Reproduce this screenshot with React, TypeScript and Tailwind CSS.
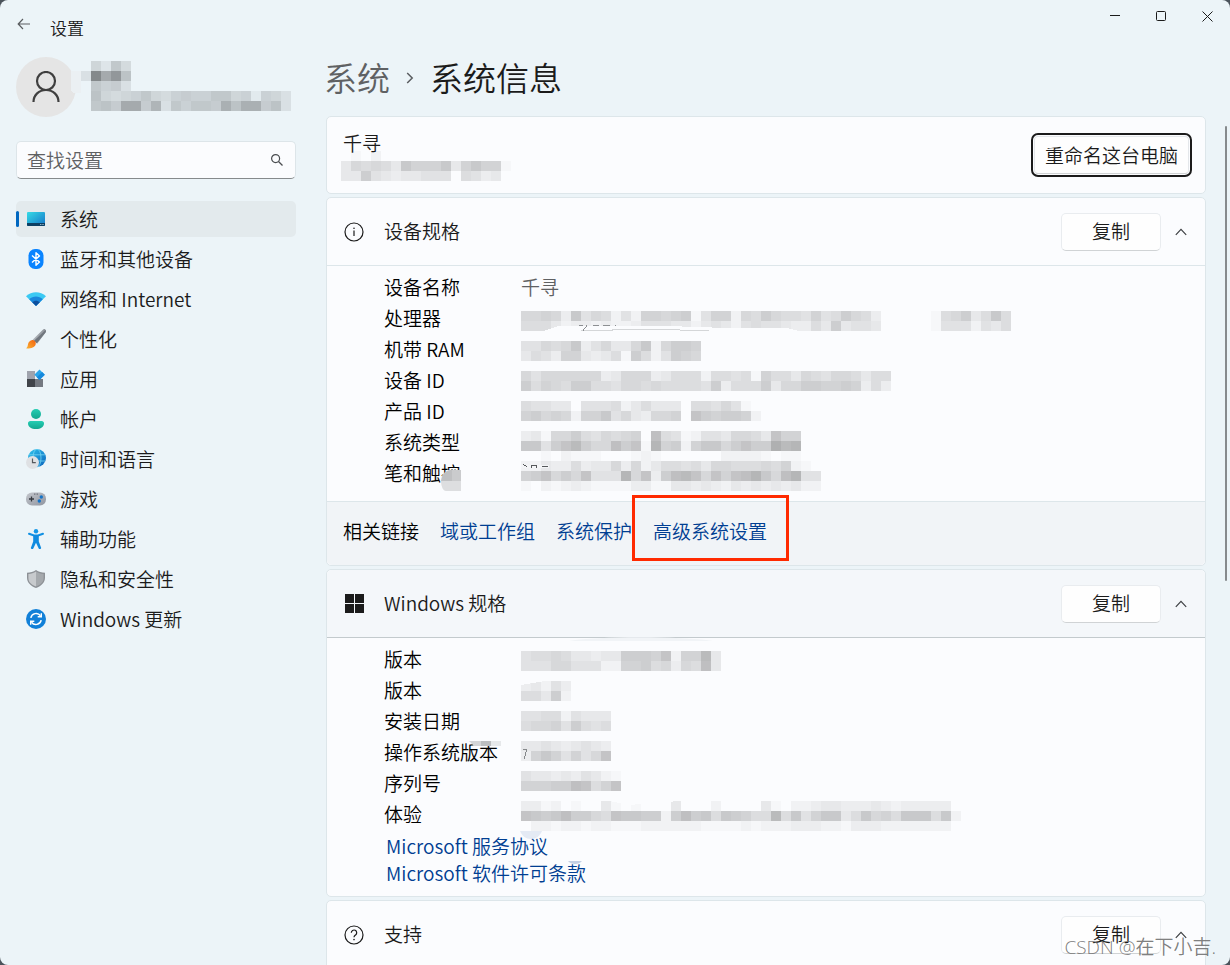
import type { ReactNode } from 'react';
import clsx from 'clsx';

const CELL = 10;

// Each character is one cell: 0 is clear, higher base-36 digits are darker.
const PROFILE_MASK = [
  '006395',
  '04mfja',
  '009784',
  '00a6567965787799672764',
  '009a8ff8d497998eaee8a4',
];

const NAME_MASK = [
  '01020000000000000',
  '476764a888a48a881',
  '4495434455506534',
];

const DEVICE_MASK = [
  '77873a57625288789158827697665856976300000167946a6',
  '6664233232235554424542565543364945540000015552546',
  '',
  '55767a357447a27998',
  '465388434619625987',
  '',
  '7577777734777346662665618664765776466',
  '9687699665776766665936669477998898363',
  '',
  '655440555624644406657510',
  '89787288a57437780b989982',
  '',
  '3417796576780c65125547764b88',
  'aa59bd977c9b1e8928aa79b99fde',
  '0010211100012100000022221011',
  '224336344737246656477666768210',
  '89b797b555e7b39cdb7b8bcea7ce55',
  '102123211113311443432434343422',
];

const WINDOWS_MASK = [
  '56676443449998b288d4',
  '555775552288967376c4',
  '',
  '34253',
  '66492',
  '',
  '556625444',
  '677859656',
  '',
  '445434543',
  '38a85857b',
  '',
  '5443435421',
  '88899cb68b',
  '',
  '33120100410100040002000041022344333432333330',
  'ba9ac9976baa9929c9a6a9866d6a58aa46a786aaa6a2',
  '02212212211122222211112122233322133322222220',
];

function Mosaic({ rows, className, children }: { rows: string[]; className?: string; children?: ReactNode }) {
  const cols = Math.max(...rows.map((row) => row.length));
  return (
    <svg
      aria-hidden="true"
      width={cols * CELL}
      height={rows.length * CELL}
      shapeRendering="crispEdges"
      className={clsx('block shrink-0 overflow-visible', className)}
    >
      {rows.map((row, y) =>
        row.split('').map((ch, x) => {
          const level = parseInt(ch, 36);
          return level > 0 ? (
            <rect
              key={`${x}-${y}`}
              x={x * CELL}
              y={y * CELL}
              width={CELL}
              height={CELL}
              fill="#000"
              fillOpacity={level * 0.02}
            />
          ) : null;
        })
      )}
      {children}
    </svg>
  );
}

function SystemIcon() {
  return (
    <svg viewBox="0 0 20 20" className="h-5 w-5">
      <defs>
        <linearGradient id="screen" x1="0" y1="0" x2="1" y2="1">
          <stop offset="0" stopColor="#35dbe6" />
          <stop offset="1" stopColor="#1474c8" />
        </linearGradient>
      </defs>
      <rect x="1" y="3" width="18" height="14" rx="1" fill="url(#screen)" />
      <path d="M1 14h18v2a1 1 0 0 1-1 1H2a1 1 0 0 1-1-1z" fill="#0c3f63" />
      <path d="M14.300 15.500h1M16.500 15.500h1" stroke="#c8e6f5" strokeWidth="1" />
    </svg>
  );
}

function BluetoothIcon() {
  return (
    <svg viewBox="0 0 20 20" className="h-5 w-5">
      <rect x="2.500" y="0" width="15" height="20" rx="6.500" fill="#0a84ff" />
      <path d="M6 6.500l7.500 6.600L10 16.200V3.800l3.500 3.100L6 13.500" fill="none" stroke="#fff" strokeWidth="1.400" strokeLinejoin="round" />
    </svg>
  );
}

function NetworkIcon() {
  return (
    <svg viewBox="0 0 20 20" className="h-5 w-5">
      <path d="M0 7.200C5.500 1.900 14.500 1.900 20 7.200L10 17z" fill="#3bc9f3" />
      <path d="M3.200 10.300c3.800-3.700 9.800-3.700 13.600 0L10 17z" fill="#1a87dc" />
      <path d="M6.200 13.200c2.200-2.100 5.400-2.100 7.600 0L10 17z" fill="#0d4f9e" />
    </svg>
  );
}

function BrushIcon() {
  return (
    <svg viewBox="0 0 20 20" className="h-5 w-5">
      <defs>
        <linearGradient id="bristle" x1="1" y1="0" x2="0" y2="1">
          <stop offset="0" stopColor="#f2620f" />
          <stop offset="1" stopColor="#fbb234" />
        </linearGradient>
        <linearGradient id="handle" x1="1" y1="0" x2="0" y2="1">
          <stop offset="0" stopColor="#8d9299" />
          <stop offset="1" stopColor="#b4b9bf" />
        </linearGradient>
      </defs>
      <path d="M19.300.500c.900.800.800 1.900.200 2.900L11.200 14.700 6.700 10.800 16.600 1c.900-.900 1.900-1.200 2.700-.500z" fill="url(#handle)" />
      <path d="M8 11.800l2.800 2.500 8.700-10.900c.500-.800.600-1.700.1-2.500z" fill="#70767e" />
      <path d="M5.600 11.300c2.200-.800 4.300 1 4.200 3.300-.1 3.400-4.500 5.700-9.800 4.600 1.700-.9 1.600-2.300 2-4 .400-1.900 1.700-3.300 3.600-3.900z" fill="url(#bristle)" />
    </svg>
  );
}

function AppsIcon() {
  return (
    <svg viewBox="0 0 20 20" className="h-5 w-5">
      <path d="M1 2h8v8H1z" fill="#9fa3ad" />
      <path d="M1 10h8v8H1z" fill="#40444a" />
      <path d="M9 10h8v8H9z" fill="#747981" />
      <path d="M13.500.500l5.300 5.200-5.300 5.300-5.200-5.300z" fill="#2aa5ea" />
      <path d="M18.800 5.700L13.500 11l-2.700-2.700 5.400-5.300z" fill="#1588dc" />
    </svg>
  );
}

function AccountsIcon() {
  return (
    <svg viewBox="0 0 20 20" className="h-5 w-5">
      <defs>
        <linearGradient id="person" x1="0" y1="0" x2="0" y2="1">
          <stop offset="0" stopColor="#25cdb3" />
          <stop offset="1" stopColor="#12a78f" />
        </linearGradient>
      </defs>
      <circle cx="10" cy="5" r="5" fill="url(#person)" />
      <path d="M4.300 12h11.400c1.300 0 2.300 1 2.300 2.200C18 17.800 14.600 20 10 20s-8-2.200-8-5.800C2 13 3 12 4.300 12z" fill="url(#person)" />
    </svg>
  );
}

function TimeIcon() {
  return (
    <svg viewBox="0 0 20 20" className="h-5 w-5">
      <defs>
        <linearGradient id="globe" x1="0" y1="0" x2="1" y2="1">
          <stop offset="0" stopColor="#2fc4ee" />
          <stop offset="1" stopColor="#0b62bb" />
        </linearGradient>
      </defs>
      <circle cx="11" cy="9" r="9" fill="url(#globe)" />
      <ellipse cx="11" cy="9" rx="4" ry="9" fill="none" stroke="#7fdcf6" strokeWidth=".7" />
      <path d="M3 5.800h16M3 12h16" stroke="#7fdcf6" strokeWidth=".7" />
      <circle cx="6.500" cy="13.500" r="6.500" fill="#dfe1e4" />
      <path d="M6.500 9.500v4.200h3.300" fill="none" stroke="#55595e" strokeWidth="1.200" />
    </svg>
  );
}

function GamingIcon() {
  return (
    <svg viewBox="0 0 20 20" className="h-5 w-5">
      <defs>
        <linearGradient id="pad" x1="0" y1="0" x2="1" y2="1">
          <stop offset="0" stopColor="#c3c6cc" />
          <stop offset="1" stopColor="#9095a0" />
        </linearGradient>
      </defs>
      <rect x="0" y="3.500" width="20" height="13" rx="6" fill="url(#pad)" />
      <path d="M5.500 7.500v5M3 10h5" stroke="#363a40" strokeWidth="1.300" />
      <path d="M8.300 5.200h1M10.700 5.200h1" stroke="#555a61" strokeWidth="1.200" />
      <circle cx="15.300" cy="8" r="1.700" fill="#1474c8" />
      <circle cx="13.300" cy="12" r="1.700" fill="#1474c8" />
    </svg>
  );
}

function AccessibilityIcon() {
  return (
    <svg viewBox="0 0 20 20" className="h-5 w-5">
      <circle cx="10" cy="2.200" r="2.200" fill="#1497e8" />
      <path d="M3 4.800l5 1.700h4l5-1.700M10 6.500v6" fill="none" stroke="#1190e3" strokeWidth="2" strokeLinecap="round" />
      <path d="M7.200 6h5.600v6.400L15 18.400a1.200 1.200 0 0 1-2.300 1L10 13.800l-2.700 5.600a1.200 1.200 0 0 1-2.300-1l2.200-6z" fill="#0f8be0" />
    </svg>
  );
}

function ShieldIcon() {
  return (
    <svg viewBox="0 0 20 20" className="h-5 w-5">
      <path d="M10 1c2.600 1.800 5.600 2.600 9 2.700v5.100c0 4.700-3.400 8.200-9 10.200-5.600-2-9-5.500-9-10.200V3.700c3.400-.100 6.400-.900 9-2.700z" fill="#8d9196" />
      <path d="M10 2.500C7.700 3.900 5.200 4.700 2.400 4.900v4c0 3.900 2.700 6.800 7.600 8.600z" fill="#c7cacd" />
      <path d="M10 2.500c2.300 1.400 4.800 2.200 7.600 2.400v4c0 3.900-2.700 6.800-7.600 8.600z" fill="#a5a9ad" />
    </svg>
  );
}

function UpdateIcon() {
  return (
    <svg viewBox="0 0 20 20" className="h-5 w-5">
      <circle cx="10" cy="10" r="10" fill="#1180d8" />
      <path d="M4.800 8.800a5.400 5.400 0 0 1 9.700-2M15.200 11.200a5.400 5.400 0 0 1-9.700 2" fill="none" stroke="#fff" strokeWidth="1.500" />
      <path d="M15.300 4.200v3.600h-3.600M4.700 15.800v-3.600h3.600" fill="none" stroke="#fff" strokeWidth="1.400" />
    </svg>
  );
}

function InfoIcon() {
  return (
    <svg viewBox="0 0 20 20" className="h-5 w-5" fill="none" stroke="#1b1b1b">
      <circle cx="10" cy="10" r="9" strokeWidth="1.200" />
      <path d="M10 8.500V14" strokeWidth="1.200" />
      <circle cx="10" cy="6.200" r=".8" fill="#1b1b1b" stroke="none" />
    </svg>
  );
}

function WindowsIcon() {
  return (
    <svg viewBox="0 0 20 20" className="h-5 w-5" fill="#1b1b1b">
      <path d="M1 0h9v9H1zM11 0h9v9h-9zM1 10h9v9H1zM11 10h9v9h-9z" />
    </svg>
  );
}

function HelpIcon() {
  return (
    <svg viewBox="0 0 20 20" className="h-5 w-5" fill="none" stroke="#1b1b1b">
      <circle cx="10" cy="10" r="9" strokeWidth="1.200" />
      <path d="M7.300 7.700a2.700 2.700 0 1 1 4.300 2.200c-1 .8-1.600 1.200-1.600 2.400" strokeWidth="1.200" />
      <circle cx="10" cy="14.600" r=".8" fill="#1b1b1b" stroke="none" />
    </svg>
  );
}

const NAV_ITEMS = [
  { label: '系统', icon: <SystemIcon /> },
  { label: '蓝牙和其他设备', icon: <BluetoothIcon /> },
  { label: '网络和 Internet', icon: <NetworkIcon /> },
  { label: '个性化', icon: <BrushIcon /> },
  { label: '应用', icon: <AppsIcon /> },
  { label: '帐户', icon: <AccountsIcon /> },
  { label: '时间和语言', icon: <TimeIcon /> },
  { label: '游戏', icon: <GamingIcon /> },
  { label: '辅助功能', icon: <AccessibilityIcon /> },
  { label: '隐私和安全性', icon: <ShieldIcon /> },
  { label: 'Windows 更新', icon: <UpdateIcon /> },
];

const DEVICE_LABELS = ['设备名称', '处理器', '机带 RAM', '设备 ID', '产品 ID', '系统类型', '笔和触控'];
const WINDOWS_LABELS = ['版本', '版本', '安装日期', '操作系统版本', '序列号', '体验'];

function TitleBar() {
  return (
    <header className="flex h-12 shrink-0 items-start">
      <button aria-label="返回" className="flex h-12 w-12 items-center justify-center">
        <svg width="14" height="12" viewBox="0 0 14 12" fill="none" stroke="#5a5d60" strokeWidth="1.200">
          <path d="M13 6H1.500M6 1L1.200 6 6 11" />
        </svg>
      </button>
      <span className="ml-[2px] flex-1 pt-4 text-[17px] leading-6">设置</span>
      <button aria-label="最小化" className="flex h-8 w-[46px] items-center justify-center">
        <svg width="10" height="10" stroke="#1b1b1b">
          <path d="M0 4.500h10" />
        </svg>
      </button>
      <button aria-label="最大化" className="flex h-8 w-[46px] items-center justify-center">
        <svg width="10" height="10" fill="none" stroke="#1b1b1b">
          <rect x=".5" y=".5" width="9" height="9" rx="1" />
        </svg>
      </button>
      <button aria-label="关闭" className="flex h-8 w-[46px] items-center justify-center">
        <svg width="11" height="11" stroke="#1b1b1b">
          <path d="M.500.500l10 10M10.500.500l-10 10" />
        </svg>
      </button>
    </header>
  );
}

function Sidebar() {
  return (
    <aside className="w-[280px] shrink-0 pt-[9px]">
      <div className="flex h-[60px] items-start">
        <div className="flex h-[60px] w-[60px] shrink-0 items-center justify-center rounded-full bg-[#e5e5e5]">
          <svg width="28" height="32" viewBox="0 0 28 32" fill="none" stroke="#3f3f3f" strokeWidth="2.200">
            <circle cx="14" cy="10" r="9" />
            <path d="M1.500 31c0-7 5.500-12 12.500-12s12.500 5 12.500 12" />
          </svg>
        </div>
        <Mosaic rows={PROFILE_MASK} className="-ml-[5px] mt-1">
          <path d="M0 10h10v22H2l-2-2z" fill="#ebf0f3" />
        </Mosaic>
      </div>

      <div className="mt-6 flex h-[38px] items-center rounded-[5px] border border-[#dde5e9] border-b-[#868a8c] bg-[#fbfcfe] pr-3 pl-[10px]">
        <input
          type="text"
          aria-label="查找设置"
          placeholder="查找设置"
          className="min-w-0 flex-1 bg-transparent text-[19px] leading-6 outline-none placeholder:text-[#5f6163]"
        />
        <svg width="12" height="12" viewBox="0 0 12 12" fill="none" stroke="#4a4d50" strokeWidth="1.200">
          <circle cx="4.600" cy="4.600" r="4" />
          <path d="M7.500 7.500l4 4" />
        </svg>
      </div>

      <nav className="mt-[22px] flex flex-col gap-1">
        {NAV_ITEMS.map((item, index) => (
          <a
            key={item.label}
            href="#"
            aria-current={index === 0 ? 'page' : undefined}
            className={clsx('relative flex h-9 items-center gap-[14px] rounded-[5px] pl-[10px] text-[19px]', index === 0 && 'bg-[#e3eaed]')}
          >
            {index === 0 && <span className="absolute top-[10px] left-0 h-4 w-[3px] rounded-full bg-[#0067c0]" />}
            {item.icon}
            <span>{item.label}</span>
          </a>
        ))}
      </nav>
    </aside>
  );
}

function CardHeader({ icon, title, className }: { icon: ReactNode; title: string; className?: string }) {
  return (
    <div className={clsx('flex h-[68px] items-center rounded-t-[5px] border-b pr-[18px] pl-[17px]', className)}>
      {icon}
      <h2 className="ml-5 flex-1 text-[19px]">{title}</h2>
      <button className="h-[38px] w-[100px] rounded-[5px] border border-[#e9ecef] border-b-[#d0d3d5] bg-[#fefefe] text-[19px]">
        复制
      </button>
      <button aria-label="折叠" className="ml-[14px]">
        <svg width="12" height="8" viewBox="0 0 12 8" fill="none" stroke="#3c3f42" strokeWidth="1.200">
          <path d="M.800 6.800L6 1.400l5.200 5.400" />
        </svg>
      </button>
    </div>
  );
}

function Labels({ items }: { items: string[] }) {
  return (
    <ul className="w-[137px] shrink-0 text-[19px] leading-[31px] text-black">
      {items.map((item, index) => (
        <li key={index}>{item}</li>
      ))}
    </ul>
  );
}

export default function App() {
  return (
    <div className="h-screen overflow-hidden bg-[#4b535b] font-['Noto_Sans_CJK_SC',sans-serif] font-[350] text-[#1b1b1b]">
      <div className="relative flex h-full flex-col overflow-hidden rounded-lg bg-[#ecf4f8]">
        <TitleBar />
        <div className="flex min-h-0 flex-1 pr-[3px] pl-4">
          <Sidebar />

          <main className="ml-[30px] min-w-0 flex-1">
            <h1 className="-ml-[2px] flex h-[68px] items-center pb-2 text-[33px]">
              <a href="#" className="text-[#5f6163]">系统</a>
              <svg width="8" height="12" viewBox="0 0 8 12" fill="none" stroke="#5a5d60" strokeWidth="1.500" className="mx-4">
                <path d="M1.200 1l5 5-5 5" />
              </svg>
              <span>系统信息</span>
            </h1>

            <div className="flex flex-col gap-[3px]">
              <section className="flex h-[78px] items-center rounded-[5px] border border-[#dde6ea] bg-[#fbfcfe] pr-4 pl-[14px]">
                <div className="flex-1">
                  <p className="pl-[2px] text-[19px] leading-7">千寻</p>
                  <Mosaic rows={NAME_MASK} className="-mt-[6px]" />
                </div>
                <button className="h-[38px] rounded-[4px] border border-[#e4e7ea] border-b-[#d0d3d5] bg-[#fefefe] px-[10px] text-[19px] outline-2 outline-offset-1 outline-[#1b1b1b]">
                  重命名这台电脑
                </button>
              </section>

              <section className="rounded-[5px] border border-[#dde6ea] bg-[#fbfcfe]">
                <CardHeader icon={<InfoIcon />} title="设备规格" className="border-[#dde6ea]" />
                <div className="relative flex pt-[5px] pb-[10px] pl-[57px]">
                  <Labels items={DEVICE_LABELS} />
                  <div>
                    <p className="mb-[9px] text-[19px] leading-[31px] text-[#5f6163]">千寻</p>
                    <Mosaic rows={DEVICE_MASK}>
                      <path d="M22 20l14-4.500 110-.5 60 2h60l12 3z" fill="#fbfcfe" />
                      <path d="M60 20c30-1.500 80-1.500 128-.5" stroke="#d4d6d8" fill="none" />
                      <path d="M58 14.500h4M66 14.500l-4 5M72 14.500h6M82 14.500h7M94 14.500h1" stroke="#8c8f92" fill="none" />
                      <path d="M0 153.500h28v3.500H0z" fill="#f4f5f7" />
                      <path d="M2 153.500l4 2M10 157v-2.500h5V157M21 155.500h6" stroke="#55585a" fill="none" />
                    </Mosaic>
                  </div>
                  {/* smudge over the last label */}
                  <svg width="20" height="21" className="absolute bottom-[10px] left-[114px]">
                    <path d="M0 11C0 4 5 0 11 0h9v21H5C2 21 0 16 0 11z" fill="#dddee0" />
                    <path d="M1 7c2-5 5-7 10-7v11H0z" fill="#bfc0c2" />
                    <path d="M11 0h9v11h-9z" fill="#cacbcd" />
                  </svg>
                </div>
                <div className="flex h-16 items-center gap-[21px] rounded-b-[5px] border-t border-[#dde6ea] bg-[#f1f4f7] pb-1 pl-4 text-[19px]">
                  <span className="text-black">相关链接</span>
                  <a href="#" className="text-[#003e92]">域或工作组</a>
                  <a href="#" className="text-[#003e92]">系统保护</a>
                  <a href="#" className="relative text-[#003e92]">
                    高级系统设置
                    <span className="absolute -top-[22px] -right-[22px] -left-[21px] h-[66px] border-3 border-[#ff2a00]" />
                  </a>
                </div>
              </section>

              <section className="rounded-[5px] border border-[#dde6ea] bg-[#fbfcfe]">
                <CardHeader icon={<WindowsIcon />} title="Windows 规格" className="border-[#c3cacd] bg-[#f4f7fa]" />
                <div className="relative pt-[5px] pb-[10px] pl-[57px]">
                  <div className="flex">
                    <Labels items={WINDOWS_LABELS} />
                    <Mosaic rows={WINDOWS_MASK} className="mt-2">
                      <path d="M0 30h24l-12 2-12 2z" fill="#fbfcfe" />
                      <path d="M2 98h4l-3 10" stroke="#85888a" fill="none" />
                      <path d="M88 150l20 4 50-4z" fill="#fbfcfe" />
                    </Mosaic>
                  </div>
                  <svg width="144" height="5" className="absolute -top-px left-[242px]">
                    <path d="M0 4C30-1 110-1 144 4z" fill="#f1f4f7" />
                  </svg>
                  <svg width="32" height="6" className="absolute top-[103px] left-[142px]">
                    <path d="M0 0h12v5H5z" fill="#d3d5d7" />
                    <path d="M12 0h10v5H12z" fill="#bcbec0" />
                    <path d="M22 0h10v5H22z" fill="#e6e8ea" />
                  </svg>
                  <div className="mt-px flex flex-col items-start pl-[2px] text-[19px] leading-[27px] text-[#003e92]">
                    <a href="#">Microsoft 服务协议</a>
                    <a href="#">Microsoft 软件许可条款</a>
                  </div>
                  <svg width="22" height="8" className="absolute top-[193px] left-[193px]">
                    <path d="M0 0h22c-2 5-6 8-11 8S2 5 0 0z" fill="#e4eaf4" />
                  </svg>
                  <svg width="14" height="3" className="absolute top-[223px] left-[241px]">
                    <path d="M0 0h14c-3 4-11 4-14 0z" fill="#c3d0e4" />
                  </svg>
                </div>
              </section>

              <section className="rounded-t-[5px] border border-[#dde6ea] bg-[#fbfcfe]">
                <CardHeader icon={<HelpIcon />} title="支持" className="border-[#dde6ea]" />
              </section>
            </div>
          </main>

          <div className="mt-[78px] ml-[19px] h-[455px] w-[2px] shrink-0 rounded-full bg-[#868a8d]" />
        </div>

        <span className="absolute right-[14px] bottom-[6px] font-['Open_Sans','Noto_Sans_CJK_SC',sans-serif] text-[19px] leading-6 text-[#6f6f6f]/90">CSDN @在下小吉.</span>
      </div>
    </div>
  );
}
